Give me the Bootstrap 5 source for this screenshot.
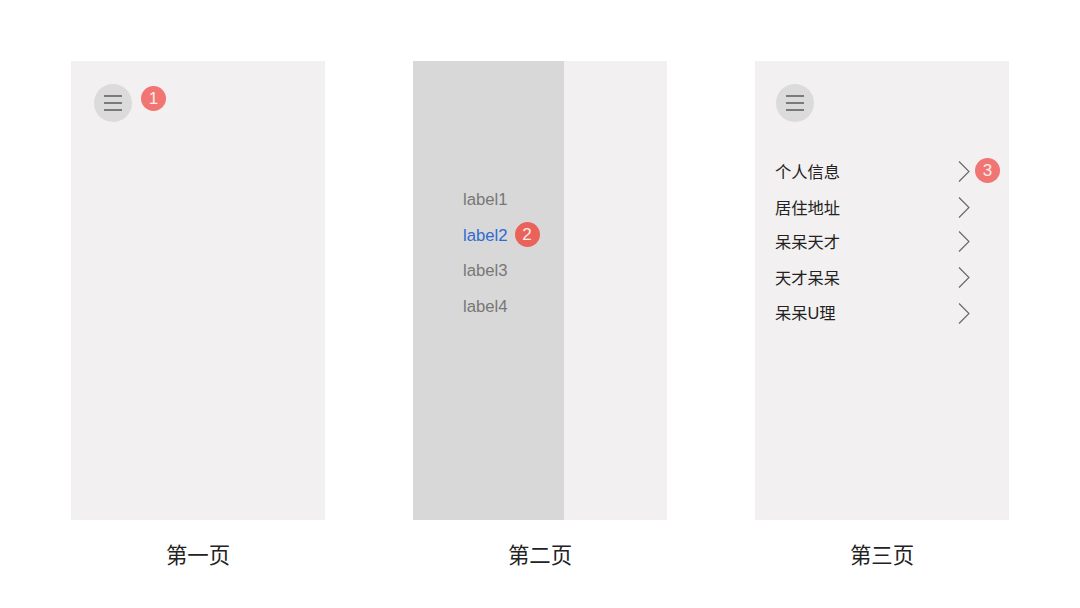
<!DOCTYPE html>
<html lang="zh">
<head>
<meta charset="utf-8">
<title>页面</title>
<link href="https://cdn.jsdelivr.net/npm/bootstrap@5.3.0/dist/css/bootstrap.min.css" rel="stylesheet">
<style>
html,body{margin:0;height:608px;overflow:hidden;background:#fff;}
body{font-family:"Liberation Sans","Noto Sans CJK SC",sans-serif;}
.stage{padding:61px 0 0 71px;gap:88px;}
.screen-col{width:254px;}
.screen{width:254px;height:459px;background:#f2f0f0;}
.screen-one{padding:23px 0 0 23px;}
.screen-three{padding:23px 0 0 21px;}
.burger{width:38px;height:38px;border-radius:50%;background:#dcdbdb;gap:5.6px;flex:none;}
.burger i{display:block;width:18px;height:1.4px;background:#7a7a7a;}
.dot{width:25px;height:25px;border-radius:50%;background:#f07573;color:#fdecea;font-size:17px;line-height:25px;text-align:center;flex:none;}
.dot-one{margin:1.5px 0 0 9px;}
.dot-two{background:#e9635b;margin-left:7px;margin-top:-3px;}
.dot-three{margin-left:4px;margin-top:-2px;}
.drawer{width:151px;height:100%;background:#d9d8d8;padding:121px 0 0 50px;}
.lbl{height:35.7px;font-size:16.7px;color:#777;line-height:35.7px;}
.lbl.on{color:#2f6bd0;}
.entries{margin:32px 0 0 -1px;}
.entry{height:35.5px;width:225px;font-size:16.3px;color:#222;}
.entry:nth-child(2),.entry:nth-child(4){margin-top:.5px;}
.entry:nth-child(3){margin-top:-1.5px;}
.entry-name{width:183px;}
.chev{width:13px;height:23px;flex:none;}
.cap{margin-top:21px;font-size:21.4px;line-height:30px;color:#222;text-align:center;}
</style>
</head>
<body>
<div class="stage d-flex align-items-start">
  <div class="screen-col">
    <div class="screen screen-one d-flex align-items-start">
      <div class="burger d-flex flex-column align-items-center justify-content-center"><i></i><i></i><i></i></div>
      <div class="dot dot-one">1</div>
    </div>
    <div class="cap">第一页</div>
  </div>
  <div class="screen-col">
    <div class="screen">
      <div class="drawer">
        <div class="lbl">label1</div>
        <div class="lbl on d-flex align-items-center">label2<span class="dot dot-two">2</span></div>
        <div class="lbl">label3</div>
        <div class="lbl">label4</div>
      </div>
    </div>
    <div class="cap">第二页</div>
  </div>
  <div class="screen-col">
    <div class="screen screen-three">
      <div class="burger d-flex flex-column align-items-center justify-content-center"><i></i><i></i><i></i></div>
      <div class="entries">
        <div class="entry d-flex align-items-center"><span class="entry-name">个人信息</span><svg class="chev" viewBox="0 0 13 23"><path d="M1 1.5l10 10L1 21.5" fill="none" stroke="#666" stroke-width="1.1"/></svg><span class="dot dot-three">3</span></div>
        <div class="entry d-flex align-items-center"><span class="entry-name">居住地址</span><svg class="chev" viewBox="0 0 13 23"><path d="M1 1.5l10 10L1 21.5" fill="none" stroke="#666" stroke-width="1.1"/></svg></div>
        <div class="entry d-flex align-items-center"><span class="entry-name">呆呆天才</span><svg class="chev" viewBox="0 0 13 23"><path d="M1 1.5l10 10L1 21.5" fill="none" stroke="#666" stroke-width="1.1"/></svg></div>
        <div class="entry d-flex align-items-center"><span class="entry-name">天才呆呆</span><svg class="chev" viewBox="0 0 13 23"><path d="M1 1.5l10 10L1 21.5" fill="none" stroke="#666" stroke-width="1.1"/></svg></div>
        <div class="entry d-flex align-items-center"><span class="entry-name">呆呆U理</span><svg class="chev" viewBox="0 0 13 23"><path d="M1 1.5l10 10L1 21.5" fill="none" stroke="#666" stroke-width="1.1"/></svg></div>
      </div>
    </div>
    <div class="cap">第三页</div>
  </div>
</div>
<script src="https://cdn.jsdelivr.net/npm/bootstrap@5.3.0/dist/js/bootstrap.bundle.min.js"></script>
</body>
</html>
